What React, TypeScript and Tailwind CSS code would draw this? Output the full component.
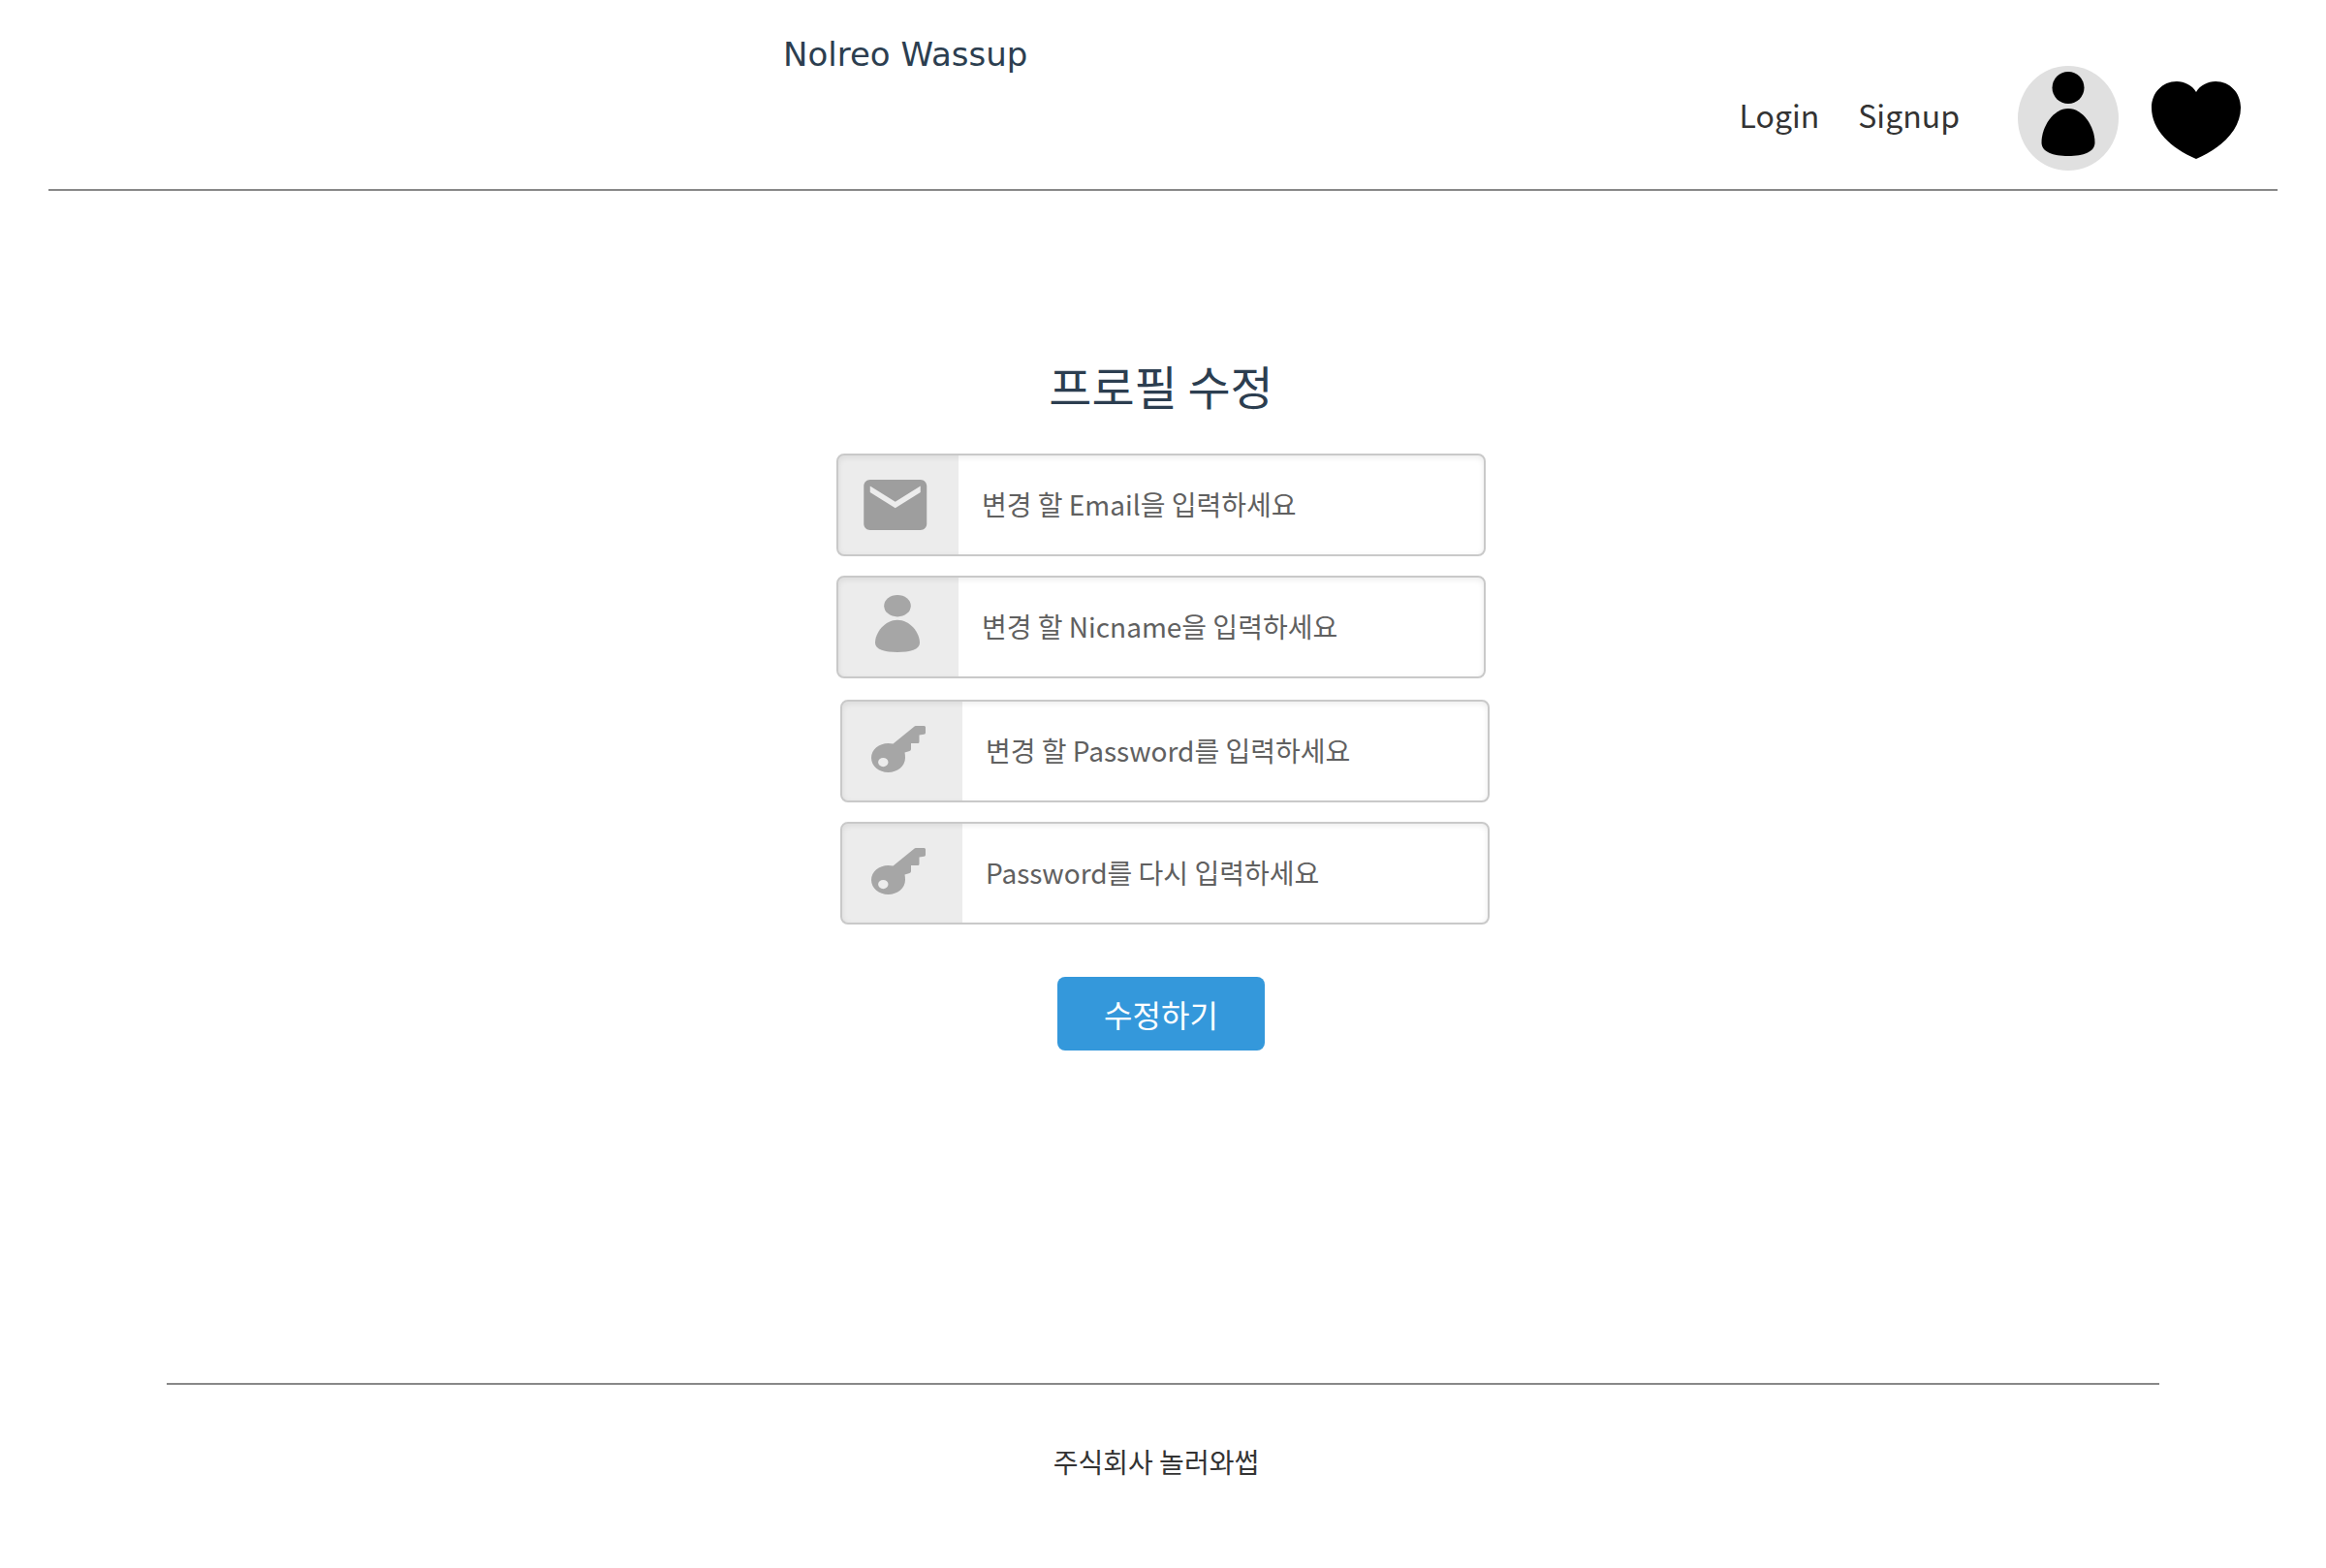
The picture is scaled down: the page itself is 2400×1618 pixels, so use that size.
import React, { useId } from "react";

const PersonShape = () => (
  <>
    <circle cx="27.5" cy="16.5" r="16.5" />
    <path d="M27.5 38C43 38 55 57 55 73C55 83 43 87 27.5 87S0 83 0 73C0 57 12 38 27.5 38Z" />
  </>
);

const MailIcon = () => (
  <svg viewBox="1 0 24 24" className="size-[78px] fill-[#9e9e9e]" aria-hidden="true">
    <path d="M20 4H4c-1.1 0-1.99.9-1.99 2L2 18c0 1.1.9 2 2 2h16c1.1 0 2-.9 2-2V6c0-1.1-.9-2-2-2zm0 4l-8 5-8-5V6l8 5 8-5v2z" />
  </svg>
);

const PersonIcon = () => (
  <svg viewBox="0 0 78 78" className="size-[78px] fill-[#a6a6a6]" aria-hidden="true">
    <svg x="15" y="6" width="46" height="59" viewBox="0 0 55 87" preserveAspectRatio="none">
      <PersonShape />
    </svg>
  </svg>
);

const KeyIcon = () => (
  <svg viewBox="0 0 78 78" className="size-[78px] fill-[#a6a6a6]" aria-hidden="true">
    <path
      fillRule="evenodd"
      transform="translate(7 13)"
      d="M46 0H54.500Q56 0 56 1.500V7Q56 8.500 54.500 8.700L49.500 9.500V16.500Q49.500 18 48 18H41V24Q41 25.500 39.500 26L34.500 27.500Q35 30 35 33C35 41.500 27 48 17.500 48S0 41.500 0 33S8 18 17.500 18Q20 18 22.500 18.500L44 1Q45 0 46 0ZM12.300 33A5.200 4.600 0 1 0 12.300 42.200A5.200 4.600 0 1 0 12.300 33Z"
    />
  </svg>
);

type FieldProps = { label: string; type: string; icon: React.ReactNode };

const Field = ({ label, type, icon }: FieldProps) => {
  const id = useId();
  return (
    <div className="flex h-[106px] overflow-hidden rounded-lg border-2 border-[#c9c9c9] shadow-[inset_0_2px_6px_rgba(0,0,0,0.08)]">
      <label htmlFor={id} aria-label={label} className="flex w-[124px] shrink-0 items-center justify-center bg-black/[0.075]">
        {icon}
      </label>
      <input
        id={id}
        type={type}
        placeholder={label}
        className="min-w-0 flex-1 bg-transparent px-6 pb-0.5 text-[28px] text-[#606060] outline-none placeholder:text-[#606060]"
      />
    </div>
  );
};

export default function App() {
  return (
    <div className="flex min-h-screen flex-col bg-white font-['Noto_Sans_CJK_KR','Noto_Sans_CJK_SC',sans-serif]">
      <header className="mx-[50px] flex h-[197px] items-start justify-between border-b-2 border-[#888888] pr-[38px] pl-[758px]">
        <a href="#" className="pt-[34px] font-['DejaVu_Sans',sans-serif] text-[34px] leading-[44px] text-[#2c3e50]">
          Nolreo Wassup
        </a>
        <nav className="flex items-center pt-[68px] text-[32px] leading-[48px] text-[#333333]">
          <div className="flex gap-10 pb-2">
            <a href="#">Login</a>
            <a href="#">Signup</a>
          </div>
          <a href="#" aria-label="Profile" className="ml-[60px]">
            <svg viewBox="0 0 104 108" className="h-[108px] w-[104px]" aria-hidden="true">
              <ellipse cx="52" cy="54" rx="52" ry="54" fill="#e0e0e0" />
              <g transform="translate(24.500 6)">
                <PersonShape />
              </g>
            </svg>
          </a>
          <a href="#" aria-label="Favorites" className="ml-[34px] pt-1">
            <svg viewBox="0 0 92 80" className="h-20 w-[92px]" aria-hidden="true">
              <path d="M46 11C42 4 34 0 26 0C11 0 0 12 0 27C0 50 20 69 46 80C72 69 92 50 92 27C92 12 81 0 66 0C58 0 50 4 46 11Z" />
            </svg>
          </a>
        </nav>
      </header>

      <main className="flex flex-1 justify-center pt-[164px]">
        <form className="flex w-[674px] flex-col" onSubmit={(e) => e.preventDefault()}>
          <h1 className="w-[670px] text-center text-5xl leading-[72px] text-[#2c3e50]">프로필 수정</h1>
          <div className="mt-[35px] flex w-[670px] flex-col gap-5">
            <Field label="변경 할 Email을 입력하세요" type="email" icon={<MailIcon />} />
            <Field label="변경 할 Nicname을 입력하세요" type="text" icon={<PersonIcon />} />
          </div>
          <div className="mt-[22px] flex w-[670px] flex-col gap-5 self-end">
            <Field label="변경 할 Password를 입력하세요" type="password" icon={<KeyIcon />} />
            <Field label="Password를 다시 입력하세요" type="password" icon={<KeyIcon />} />
          </div>
          <div className="mt-[54px] flex w-[670px] justify-center">
            <button type="submit" className="h-[76px] w-[214px] rounded-lg bg-[#3498db] text-[32px] text-white">
              수정하기
            </button>
          </div>
        </form>
      </main>

      <footer className="mx-[172px] h-[191px] border-t-2 border-[#888888] pt-[58px] pr-3.5 text-center text-[28px] leading-[42px] text-[#333333]">
        주식회사 놀러와썹
      </footer>
    </div>
  );
}
